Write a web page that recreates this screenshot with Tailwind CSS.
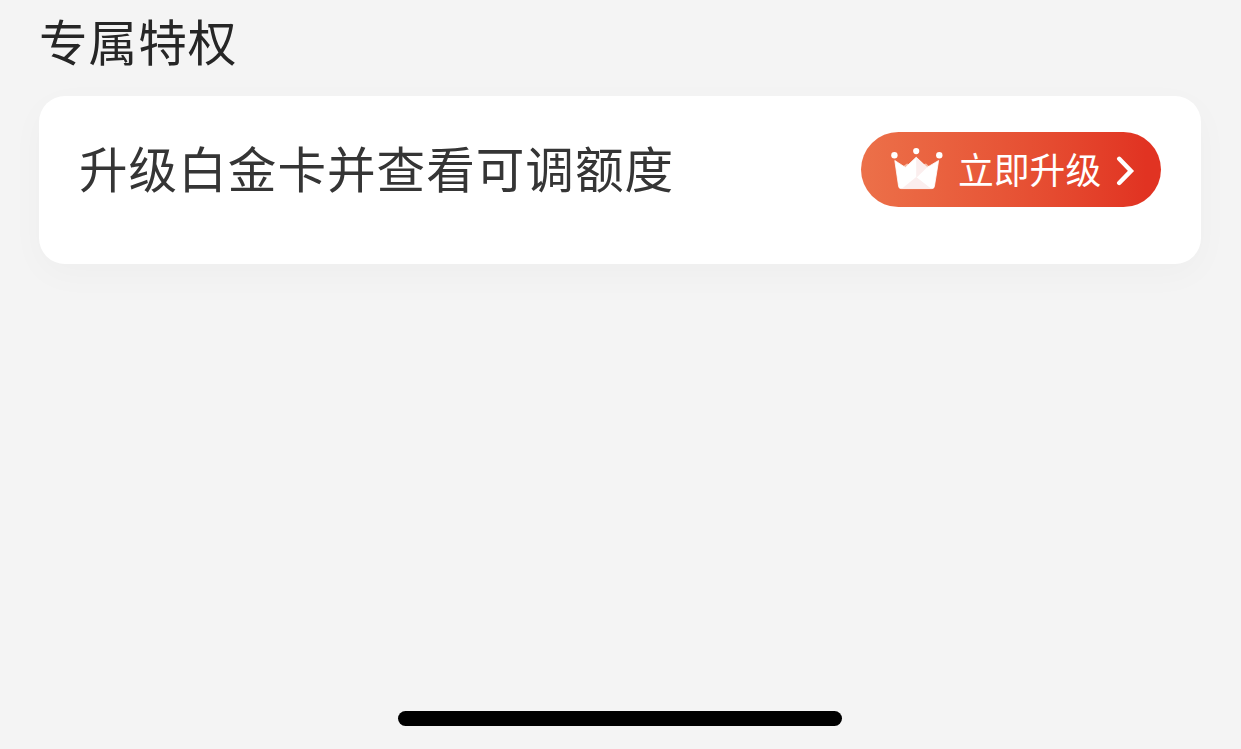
<!DOCTYPE html>
<html lang="zh-CN">
<head>
    <meta charset="UTF-8">
    <meta name="viewport" content="width=device-width, initial-scale=1.0">
    <title>专属特权</title>
    <script src="https://cdn.jsdelivr.net/npm/@tailwindcss/browser@4"></script>
</head>
<body class="bg-[#f4f4f4] font-['Noto_Sans_CJK_SC',sans-serif] antialiased">

    <div class="flex flex-col h-[749px] overflow-hidden">
        <main class="flex-1 pl-[39px] pr-10 pt-1">
            <h1 class="h-[72px] leading-[72px] text-[48.6px] tracking-[1px] font-normal text-[#262626]">专属特权</h1>

            <section class="mt-5 flex items-start justify-between h-[168px] pl-10 pr-10 pt-9 bg-white rounded-[26px] shadow-[0_10px_36px_rgba(0,0,0,0.028)]">
                <p class="h-[71px] leading-[71px] text-[48.6px] tracking-[1px] text-[#353535] whitespace-nowrap">升级白金卡并查看可调额度</p>

                <button class="flex items-center w-[300px] h-[75px] pl-[30px] rounded-full text-white bg-linear-to-r from-[#ec7049] to-[#e13322] to-95%">
                    <!-- Crown -->
                    <svg class="w-[52px] h-11 shrink-0" viewBox="0 0 52 44" fill="none">
                        <path d="M11 19 16 15.5 20 17 25 22 30 17 35 15.5 39 19 33 25H17Z" fill="#f6b9a3" />
                        <path d="M3.8 12.5 14.4 19.4 25.2 9.2 36 19.4 47.6 12.5 43.4 38.4Q43 40.6 41 40.6H10Q8 40.6 7.6 38.4Z" fill="#fff" stroke="#fff" stroke-width="0.8" stroke-linejoin="round" />
                        <path d="M25.2 9.2 34.5 18 36 19.4 25.2 30Z" fill="#fbeeee" />
                        <path d="M25.2 29 40 40.6H11Z" fill="#fbeeee" />
                        <circle cx="3.4" cy="7.3" r="3.2" fill="#fff" />
                        <circle cx="25.2" cy="3.1" r="3.1" fill="#fff" />
                        <circle cx="48.3" cy="7.3" r="3.2" fill="#fff" />
                    </svg>
                    <span class="ml-[15px] text-[35.8px] leading-[70px] h-[73px] font-normal whitespace-nowrap">立即升级</span>
                    <!-- Chevron -->
                    <svg class="ml-[15px] w-5 h-8 shrink-0" viewBox="0 0 20 32" fill="none" stroke="#fff" stroke-width="4.4" stroke-linecap="round" stroke-linejoin="miter">
                        <path d="M3.2 4.8 15 16.9 3.2 29" />
                    </svg>
                </button>
            </section>
        </main>

        <!-- Home indicator -->
        <footer class="flex justify-center pr-px pb-[23px]">
            <div class="w-[444px] h-[15px] rounded-full bg-black"></div>
        </footer>
    </div>

</body>
</html>
